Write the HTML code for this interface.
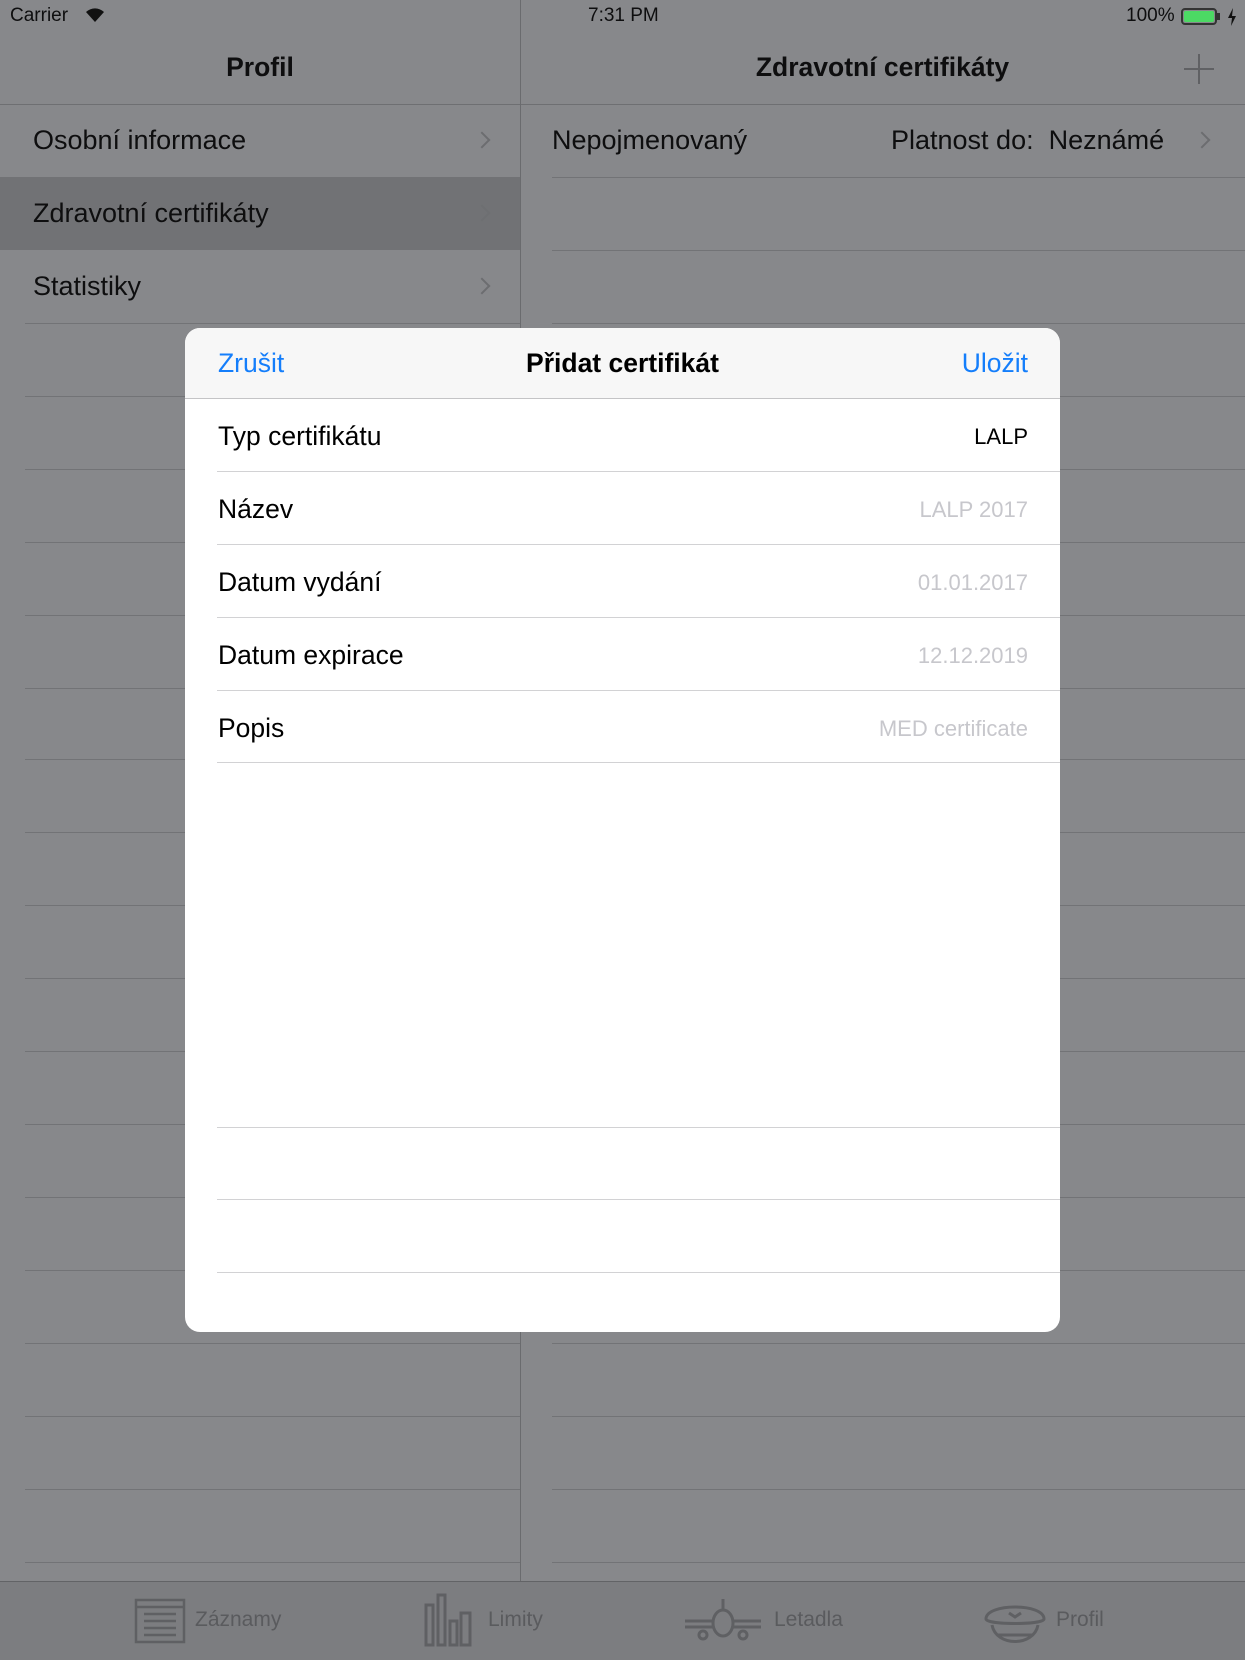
<!DOCTYPE html>
<html><head><meta charset="utf-8"><style>
*{margin:0;padding:0;box-sizing:border-box}
body{width:1245px;height:1660px;position:relative;overflow:hidden;background:#87888b;font-family:"Liberation Sans",sans-serif;color:#0e0e0f}
.abs{position:absolute}
.sep{position:absolute;height:1px;background:#727376}
.row{position:absolute;font-size:27px;line-height:73px}
.chev{position:absolute;width:12px;height:12px;border-right:2px solid #6c6d70;border-top:2px solid #6c6d70;transform:rotate(45deg)}
.m{position:absolute;left:185px;top:328px;width:875px;height:1004px;background:#fff;border-radius:15px;overflow:hidden}
.mh{position:absolute;left:0;top:0;width:875px;height:71px;background:#f7f7f7;border-bottom:1px solid #c4c4c6}
.ms{position:absolute;left:32px;right:0;height:1px;background:#d2d2d4}
.ml{position:absolute;left:33px;font-size:26.5px;line-height:75px;color:#000}
.mv{position:absolute;right:32px;font-size:22px;line-height:75px;color:#c7c7cc}
.tab{position:absolute;font-size:21px;color:#5a5b5e;top:1608px}
</style></head><body>
<!-- status -->
<div class="abs" style="left:10px;top:5px;font-size:19px">Carrier</div>
<svg class="abs" style="left:84px;top:7px" width="22" height="16" viewBox="0 0 22 16"><path d="M11 15 L2 5 A13 13 0 0 1 20 5 Z" fill="#111"/></svg>
<div class="abs" style="left:588px;top:5px;font-size:19px">7:31 PM</div>
<div class="abs" style="left:1126px;top:5px;font-size:19px">100%</div>
<div class="abs" style="left:1181px;top:8px;width:36px;height:17px;border:2px solid #333;border-radius:4px;padding:1px"><div style="width:100%;height:100%;background:#4cd964;border-radius:2px"></div></div>
<div class="abs" style="left:1217px;top:13px;width:3px;height:7px;background:#333"></div>
<svg class="abs" style="left:1227px;top:8px" width="10" height="18" viewBox="0 0 10 18"><path d="M6 0 L1 10 H5 L4 18 L9 8 H5 Z" fill="#111"/></svg>
<!-- nav -->
<div class="abs" style="left:0;top:52px;width:520px;text-align:center;font-size:26.5px;font-weight:bold">Profil</div>
<div class="abs" style="left:520px;top:52px;width:725px;text-align:center;font-size:26.5px;font-weight:bold">Zdravotní certifikáty</div>
<div class="abs" style="left:1184px;top:68px;width:30px;height:2px;background:#606164"></div>
<div class="abs" style="left:1198px;top:54px;width:2px;height:30px;background:#606164"></div>
<div class="sep" style="left:0;top:104px;width:1245px;background:#6e6f72"></div>
<div class="abs" style="left:520px;top:0;width:1px;height:1581px;background:#6a6b6e"></div>
<!-- left list -->
<div class="abs" style="left:0;top:177px;width:520px;height:73px;background:#717275"></div>
<div class="row" style="left:33px;top:104px">Osobní informace</div>
<div class="row" style="left:33px;top:177px">Zdravotní certifikáty</div>
<div class="row" style="left:33px;top:250px">Statistiky</div>
<div class="chev" style="left:476px;top:134px"></div>
<div class="chev" style="left:476px;top:207px;opacity:.5"></div>
<div class="chev" style="left:476px;top:280px"></div>
<div class="row" style="left:552px;top:104px">Nepojmenovaný</div>
<div class="row" style="left:891px;top:104px">Platnost do:&nbsp; Neznámé</div>
<div class="chev" style="left:1196px;top:134px"></div>
<div class="sep" style="left:552px;top:177px;width:693px"></div>
<div class="sep" style="left:552px;top:250px;width:693px"></div>
<div class="sep" style="left:25px;top:323px;width:495px"></div><div class="sep" style="left:552px;top:323px;width:693px"></div>
<div class="sep" style="left:25px;top:396px;width:495px"></div><div class="sep" style="left:552px;top:396px;width:693px"></div>
<div class="sep" style="left:25px;top:469px;width:495px"></div><div class="sep" style="left:552px;top:469px;width:693px"></div>
<div class="sep" style="left:25px;top:542px;width:495px"></div><div class="sep" style="left:552px;top:542px;width:693px"></div>
<div class="sep" style="left:25px;top:615px;width:495px"></div><div class="sep" style="left:552px;top:615px;width:693px"></div>
<div class="sep" style="left:25px;top:688px;width:495px"></div><div class="sep" style="left:552px;top:688px;width:693px"></div>
<div class="sep" style="left:25px;top:759px;width:495px"></div><div class="sep" style="left:552px;top:759px;width:693px"></div>
<div class="sep" style="left:25px;top:832px;width:495px"></div><div class="sep" style="left:552px;top:832px;width:693px"></div>
<div class="sep" style="left:25px;top:905px;width:495px"></div><div class="sep" style="left:552px;top:905px;width:693px"></div>
<div class="sep" style="left:25px;top:978px;width:495px"></div><div class="sep" style="left:552px;top:978px;width:693px"></div>
<div class="sep" style="left:25px;top:1051px;width:495px"></div><div class="sep" style="left:552px;top:1051px;width:693px"></div>
<div class="sep" style="left:25px;top:1124px;width:495px"></div><div class="sep" style="left:552px;top:1124px;width:693px"></div>
<div class="sep" style="left:25px;top:1197px;width:495px"></div><div class="sep" style="left:552px;top:1197px;width:693px"></div>
<div class="sep" style="left:25px;top:1270px;width:495px"></div><div class="sep" style="left:552px;top:1270px;width:693px"></div>
<div class="sep" style="left:25px;top:1343px;width:495px"></div><div class="sep" style="left:552px;top:1343px;width:693px"></div>
<div class="sep" style="left:25px;top:1416px;width:495px"></div><div class="sep" style="left:552px;top:1416px;width:693px"></div>
<div class="sep" style="left:25px;top:1489px;width:495px"></div><div class="sep" style="left:552px;top:1489px;width:693px"></div>
<div class="sep" style="left:25px;top:1562px;width:495px"></div><div class="sep" style="left:552px;top:1562px;width:693px"></div>
<!-- tab bar -->
<div class="abs" style="left:0;top:1581px;width:1245px;height:79px;background:#7c7d80;border-top:1px solid #626366"></div>
<svg class="abs" style="left:134px;top:1598px" width="52" height="46" viewBox="0 0 52 46" fill="none" stroke="#5f6063" stroke-width="2.5"><rect x="2" y="2" width="48" height="42"/><line x1="2" y1="9" x2="50" y2="9"/><line x1="10" y1="16" x2="42" y2="16"/><line x1="10" y1="23" x2="42" y2="23"/><line x1="10" y1="30" x2="42" y2="30"/><line x1="10" y1="37" x2="42" y2="37"/></svg>
<div class="tab" style="left:195px">Záznamy</div>
<svg class="abs" style="left:423px;top:1593px" width="52" height="54" viewBox="0 0 52 54" fill="none" stroke="#5f6063" stroke-width="3"><rect x="3" y="12" width="7" height="40"/><rect x="15" y="2" width="7" height="50"/><rect x="27" y="28" width="7" height="24"/><rect x="38" y="20" width="9" height="32"/></svg>
<div class="tab" style="left:488px">Limity</div>
<svg class="abs" style="left:683px;top:1597px" width="80" height="46" viewBox="0 0 80 46" fill="none" stroke="#5f6063" stroke-width="3"><path d="M40 2 V12"/><ellipse cx="40" cy="26" rx="10" ry="13"/><path d="M2 24 H30 M50 24 H78 M2 30 H30 M50 30 H78"/><circle cx="20" cy="38" r="4"/><circle cx="60" cy="38" r="4"/></svg>
<div class="tab" style="left:774px">Letadla</div>
<svg class="abs" style="left:982px;top:1595px" width="66" height="54" viewBox="0 0 66 54" fill="none" stroke="#5f6063" stroke-width="3"><path d="M4 24 C4 8 62 8 62 24 C62 30 4 30 4 24 Z"/><path d="M10 30 C14 52 52 52 56 30"/><path d="M16 40 H50"/><path d="M27 18 L33 22 L39 18"/></svg>
<div class="tab" style="left:1056px">Profil</div>
<!-- modal -->
<div class="m">
 <div class="mh"></div>
 <div class="abs" style="left:33px;top:20px;font-size:26.5px;color:#147efb">Zrušit</div>
 <div class="abs" style="left:0;top:20px;width:875px;text-align:center;font-size:26.5px;font-weight:bold;color:#000">Přidat certifikát</div>
 <div class="abs" style="right:32px;top:20px;font-size:26.5px;color:#147efb">Uložit</div>
 <div class="ml" style="top:71px">Typ certifikátu</div><div class="mv" style="top:71px;color:#000">LALP</div>
 <div class="ms" style="top:143px"></div>
 <div class="ml" style="top:144px">Název</div><div class="mv" style="top:144px">LALP 2017</div>
 <div class="ms" style="top:216px"></div>
 <div class="ml" style="top:217px">Datum vydání</div><div class="mv" style="top:217px">01.01.2017</div>
 <div class="ms" style="top:289px"></div>
 <div class="ml" style="top:290px">Datum expirace</div><div class="mv" style="top:290px">12.12.2019</div>
 <div class="ms" style="top:362px"></div>
 <div class="ml" style="top:363px">Popis</div><div class="mv" style="top:363px">MED certificate</div>
 <div class="ms" style="top:434px"></div>
 <div class="ms" style="top:799px"></div>
 <div class="ms" style="top:871px"></div>
 <div class="ms" style="top:944px"></div>
</div>
</body></html>
